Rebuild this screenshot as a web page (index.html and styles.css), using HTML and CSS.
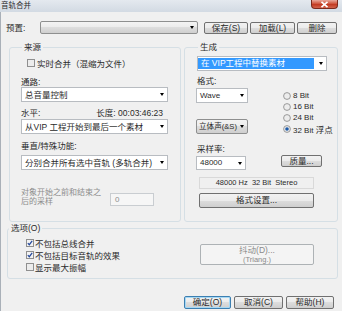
FILE: index.html
```
<!DOCTYPE html>
<html lang="zh-CN">
<head>
<meta charset="utf-8">
<title>音轨合并</title>
<link rel="stylesheet" href="styles.css">
</head>
<body>
<div class="win">
  <div class="titlebar">
    <span class="title">音轨合并</span>
    <span class="close"><svg width="9" height="7" viewBox="0 0 9 7"><path d="M1.5 0.8 L7.5 6.2 M7.5 0.8 L1.5 6.2" stroke="#fff" stroke-width="1.6" fill="none"/></svg></span>
  </div>

  <div class="preset-row">
    <span class="preset-lbl">预置:</span>
    <div class="combo grad preset-combo"><span class="arr"></span></div>
    <button class="btn b-save">保存(S)</button>
    <button class="btn b-load">加载(L)</button>
    <button class="btn b-del">删除</button>
  </div>

  <div class="groups">
    <fieldset class="grp grp-src">
      <legend>来源</legend>
      <div class="chk-row c-realtime">
        <svg class="chk" width="8" height="8" viewBox="0 0 8 8"><rect x="0.5" y="0.5" width="7" height="7" fill="#ececec" stroke="#8f8f8f"/></svg>
        <span>实时合并（混缩为文件）</span>
      </div>
      <div class="lbl l-route">通路:</div>
      <div class="combo white c-wide"><span class="ctext">总音量控制</span><span class="arr"></span></div>
      <div class="row-h"><span>水平:</span><span>长度: 00:03:46:23</span></div>
      <div class="combo white c-wide c-range"><span class="ctext">从VIP 工程开始到最后一个素材</span><span class="arr"></span></div>
      <div class="lbl l-vert">垂直/特殊功能:</div>
      <div class="combo white c-wide c-mode"><span class="ctext">分别合并所有选中音轨 (多轨合并)</span><span class="arr"></span></div>
      <div class="obj-row">
        <div class="obj-text">对象开始之前和结束之<br>后的采样</div>
        <div class="obj-input">0</div>
      </div>
    </fieldset>

    <fieldset class="grp grp-gen">
      <legend>生成</legend>
      <div class="combo white c-sel"><span class="hl">在 VIP工程中替换素材</span><span class="arr"></span></div>
      <div class="lbl l-fmt">格式:</div>
      <div class="fmt-grid">
        <div class="fmt-left">
          <div class="combo white c-fmt"><span class="ctext lat">Wave</span><span class="arr"></span></div>
          <div class="combo grad c-fmt"><span class="ctext small">立体声(&amp;S)</span><span class="arr"></span></div>
        </div>
        <div class="radios">
          <div class="radio-row"><svg class="rad" width="8" height="8" viewBox="0 0 8 8"><circle cx="4" cy="4" r="3.4" fill="#ececec" stroke="#8f8f8f" stroke-width="0.9"/></svg><span class="lat">8 Bit</span></div>
          <div class="radio-row"><svg class="rad" width="8" height="8" viewBox="0 0 8 8"><circle cx="4" cy="4" r="3.4" fill="#ececec" stroke="#8f8f8f" stroke-width="0.9"/></svg><span class="lat">16 Bit</span></div>
          <div class="radio-row"><svg class="rad" width="8" height="8" viewBox="0 0 8 8"><circle cx="4" cy="4" r="3.4" fill="#ececec" stroke="#8f8f8f" stroke-width="0.9"/></svg><span class="lat">24 Bit</span></div>
          <div class="radio-row"><svg class="rad" width="8" height="8" viewBox="0 0 8 8"><circle cx="4" cy="4" r="3.4" fill="#ececec" stroke="#8f8f8f" stroke-width="0.9"/><circle cx="4" cy="4" r="1.8" fill="#1d5aa8"/></svg><span><span class="lat">32 Bit</span> 浮点</span></div>
        </div>
      </div>
      <div class="lbl l-rate">采样率:</div>
      <div class="rate-row">
        <div class="combo white c-rate"><span class="ctext lat">48000</span><span class="arr"></span></div>
        <button class="btn b-quality">质量...</button>
      </div>
      <div class="info lat">48000 Hz&nbsp; 32 Bit&nbsp; Stereo</div>
      <button class="btn b-fmtset">格式设置...</button>
    </fieldset>
  </div>

  <fieldset class="grp grp-opt">
    <legend>选项(O)</legend>
    <div class="opt-body">
      <div class="opt-checks">
        <div class="chk-row opt-row">
          <svg class="chk" width="8" height="8" viewBox="0 0 8 8"><rect x="0.5" y="0.5" width="7" height="7" fill="#f2f2f2" stroke="#8f8f8f"/><path d="M1.8 4.1 L3.3 5.7 L6.2 1.9" stroke="#23479b" stroke-width="1.2" fill="none"/></svg>
          <span>不包括总线合并</span>
        </div>
        <div class="chk-row opt-row">
          <svg class="chk" width="8" height="8" viewBox="0 0 8 8"><rect x="0.5" y="0.5" width="7" height="7" fill="#f2f2f2" stroke="#8f8f8f"/><path d="M1.8 4.1 L3.3 5.7 L6.2 1.9" stroke="#23479b" stroke-width="1.2" fill="none"/></svg>
          <span>不包括目标音轨的效果</span>
        </div>
        <div class="chk-row opt-row">
          <svg class="chk" width="8" height="8" viewBox="0 0 8 8"><rect x="0.5" y="0.5" width="7" height="7" fill="#ececec" stroke="#8f8f8f"/></svg>
          <span>显示最大振幅</span>
        </div>
      </div>
      <button class="btn b-dither" disabled>抖动(D)...<br><span class="lat">(Triang.)</span></button>
    </div>
  </fieldset>

  <div class="footer">
    <button class="btn b-ok">确定(O)</button>
    <button class="btn b-cancel">取消(C)</button>
    <button class="btn b-help">帮助(H)</button>
  </div>
</div>
</body>
</html>
```

FILE: styles.css
```
* { box-sizing: border-box; }

body {
  margin: 0;
  width: 342px;
  height: 311px;
  overflow: hidden;
  font-family: "Liberation Sans", "Noto Sans CJK SC", sans-serif;
  font-size: 8.5px;
  color: #2a2a2a;
  background: #f0f0f0;
}

.win {
  width: 342px;
  height: 311px;
  background: #f0f0f0;
  display: flex;
  flex-direction: column;
  box-shadow: inset 1px 0 #a9b0b8;
}

.titlebar {
  height: 12px;
  flex: none;
  display: flex;
  align-items: flex-start;
  background: linear-gradient(#e4e9ef, #d2dae3);
}

.title {
  font-size: 7.5px;
  line-height: 10px;
  margin: 1px 0 0 1px;
}

.close {
  margin-left: auto;
  margin-right: 4px;
  width: 27px;
  height: 9px;
  background: linear-gradient(#e9a99c, #d0573f 45%, #c23a22 55%, #d2634c);
  border: 1px solid #7c2a1d;
  border-top: 0;
  border-radius: 0 0 4px 4px;
  display: flex;
  align-items: center;
  justify-content: center;
}

.lat { font-family: "Liberation Sans", sans-serif; font-size: 8px; }

/* preset row */
.preset-row {
  margin-top: 9px;
  height: 13px;
  flex: none;
  display: flex;
  align-items: center;
  padding-left: 6px;
}
.preset-lbl { width: 34px; line-height: 10px; }
.preset-combo { width: 158px; height: 13px; }

.btn {
  font: inherit;
  color: #2a2a2a;
  padding: 0;
  height: 12px;
  line-height: 10px;
  border: 1px solid #707070;
  border-radius: 2px;
  background: linear-gradient(#f2f2f2 0, #ebebeb 50%, #dddddd 50%, #cfcfcf 100%);
  white-space: nowrap;
}
.b-save { margin-left: 6px; width: 44px; }
.b-load { margin-left: 2px; width: 45px; }
.b-del { margin-left: 2px; width: 40px; }

/* combos */
.combo {
  display: flex;
  align-items: center;
  white-space: nowrap;
  overflow: hidden;
}
.combo.white { background: #fff; border: 1px solid #b8bcc1; }
.combo.grad {
  background: linear-gradient(#f3f3f3, #ebebeb 50%, #dddddd 50%, #cfcfcf);
  border: 1px solid #8e8f8f;
  border-radius: 2px;
}
.ctext { padding-left: 3px; line-height: 10px; }
.ctext.small { font-size: 7.6px; padding-left: 2px; }
.arr {
  flex: none;
  width: 0;
  height: 0;
  border-left: 2.5px solid transparent;
  border-right: 2.5px solid transparent;
  border-top: 3px solid #000;
  margin-left: auto;
  margin-right: 3px;
}

/* groups */
.groups {
  flex: none;
  display: flex;
  gap: 3px;
  margin: 8px 0 0 9px;
  height: 180px;
}
.grp {
  margin: 0;
  padding: 0;
  border: 1px solid #d5dfe5;
  border-radius: 3px;
  min-width: 0;
}
legend {
  padding: 0 2px;
  margin-left: 1px;
  line-height: 10px;
  height: 10px;
}

.grp-src { width: 172px; padding-left: 11px; }
.lbl { line-height: 10px; }

.chk-row { display: flex; align-items: center; gap: 1px; }
.chk { flex: none; }
.c-realtime { margin: 6px 0 0 6px; height: 9px; gap: 2px; }
.l-route { margin-top: 10px; }
.c-wide { width: 147px; height: 15px; }
.row-h {
  margin-top: 6px;
  line-height: 10px;
  width: 142px;
  display: flex;
  justify-content: space-between;
}
.c-range { margin-top: 1px; }
.l-vert { margin-top: 7px; }
.c-mode { margin-top: 4px; }

.obj-row { margin-top: 18px; display: flex; align-items: flex-end; }
.obj-text { width: 89px; line-height: 9px; font-size: 8px; color: #8d8d8d; }
.obj-input {
  width: 44px;
  height: 13px;
  border: 1px solid #c9cdd1;
  background: #f6f6f6;
  color: #8d8d8d;
  padding-left: 4px;
  line-height: 11px;
  font-size: 8px;
}

.grp-gen { width: 154px; padding-left: 12px; }
.c-sel { margin-top: 4px; width: 130px; height: 15px; padding: 1px 0 1px 0; }
.hl {
  width: 116px;
  height: 100%;
  background: #3399ff;
  color: #fff;
  padding-left: 3px;
  line-height: 11px;
}
.l-fmt { margin-top: 5px; }
.fmt-grid { margin-top: 2px; display: flex; height: 46px; }
.fmt-left {
  width: 52px;
  margin-left: -1px;
  display: flex;
  flex-direction: column;
  justify-content: space-between;
}
.c-fmt { height: 15px; width: 52px; }
.radios { margin-left: 35px; padding-top: 2px; display: flex; flex-direction: column; }
.radio-row { height: 11px; display: flex; align-items: center; gap: 2px; white-space: nowrap; }
.rad { flex: none; }

.l-rate { margin-top: 10px; }
.rate-row { margin-top: 1px; display: flex; align-items: flex-start; height: 15px; }
.c-rate { width: 50px; height: 14px; margin: 1px 0 0 -1px; }
.b-quality { margin-left: 35px; width: 41px; height: 12px; }

.info {
  margin: 7px 0 0 2px;
  width: 115px;
  height: 12px;
  border: 1px solid #d9d9d9;
  text-align: center;
  line-height: 10px;
  font-size: 7.5px;
}
.b-fmtset { display: block; margin: 4px 0 0 2px; width: 115px; height: 15px; line-height: 13px; }

/* options */
.grp-opt { flex: none; margin: 1px 0 0 7px; width: 331px; height: 56px; }
.opt-body { display: flex; }
.opt-checks { margin-top: 4px; padding-left: 18px; width: 192px; }
.opt-row { height: 12px; }
.b-dither {
  margin-top: 11px;
  width: 114px;
  height: 21px;
  line-height: 9px;
  color: #8a8a8a;
  border-color: #adb2b5;
  background: #f4f4f4;
}
.b-dither .lat { font-size: 7.5px; }

/* footer */
.footer {
  flex: none;
  margin-top: 17px;
  padding-left: 184px;
  display: flex;
  gap: 3px;
}
.footer .btn { height: 13px; line-height: 11px; }
.b-ok { width: 47px; border-color: #3c7fb1; box-shadow: inset 0 0 0 1px #a6d8f4; }
.b-cancel { width: 49px; }
.b-help { width: 48px; }
```
